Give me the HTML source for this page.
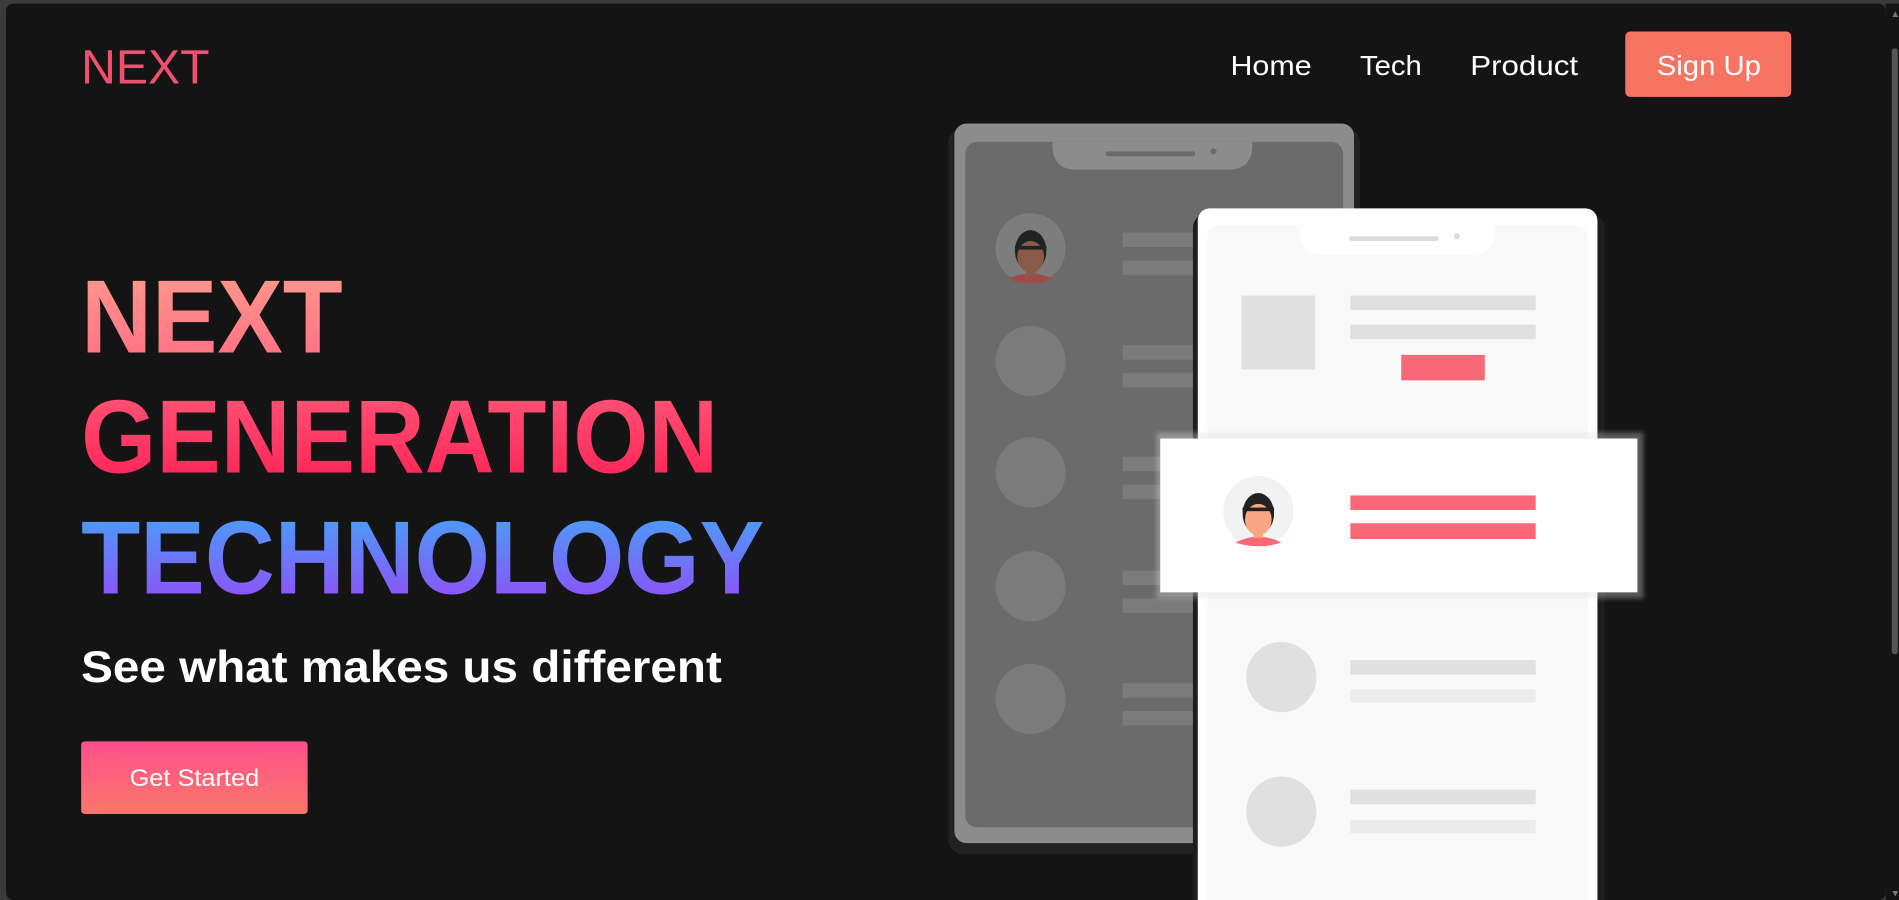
<!DOCTYPE html>
<html><head><meta charset="utf-8"><style>
html,body{margin:0;padding:0;background:#3a3a3a;overflow:hidden}
svg{display:block}
</style></head><body>
<svg width="1899" height="900" viewBox="0 0 1568 743" preserveAspectRatio="none" font-family="Liberation Sans, sans-serif">
<defs>
<linearGradient id="g1" x1="0" y1="0" x2="0" y2="1"><stop offset="0" stop-color="#ff9d8c"/><stop offset="1" stop-color="#ff6b84"/></linearGradient>
<linearGradient id="g2" x1="0" y1="0" x2="0" y2="1"><stop offset="0" stop-color="#ff5a7a"/><stop offset="1" stop-color="#ff1d52"/></linearGradient>
<linearGradient id="g3" x1="0" y1="0" x2="0" y2="1"><stop offset="0" stop-color="#3eaaf8"/><stop offset="1" stop-color="#9a44f9"/></linearGradient>
<linearGradient id="gb" x1="0" y1="0" x2="0" y2="1"><stop offset="0" stop-color="#ff4f8b"/><stop offset="1" stop-color="#f9776a"/></linearGradient>
<filter id="sh" x="-10%" y="-20%" width="120%" height="140%"><feGaussianBlur stdDeviation="2"/></filter>
</defs>
<rect x="5" y="3" width="1552" height="740" rx="6" fill="#141414"/>
<rect x="1557" y="3" width="11" height="740" fill="#141414"/>
<rect x="1562" y="40" width="5" height="500" rx="2" fill="#555"/>
<text x="1561" y="14" font-size="8" fill="#777">▲</text>
<text x="1561" y="740" font-size="8" fill="#777">▼</text>
<text x="67" y="69" font-size="40" fill="#f0506e" textLength="106" lengthAdjust="spacingAndGlyphs">NEXT</text>
<g fill="#fff" font-size="23">
<text x="1016" y="62" textLength="67" lengthAdjust="spacingAndGlyphs">Home</text>
<text x="1123" y="62" textLength="51" lengthAdjust="spacingAndGlyphs">Tech</text>
<text x="1214" y="62" textLength="89" lengthAdjust="spacingAndGlyphs">Product</text>
</g>
<rect x="1342" y="26" width="137" height="54" rx="4" fill="#f87462"/>
<text x="1368" y="62" font-size="23" fill="#fff" textLength="86" lengthAdjust="spacingAndGlyphs">Sign Up</text>
<g font-weight="bold" font-size="86">
<text x="67" y="291" fill="url(#g1)" textLength="216" lengthAdjust="spacingAndGlyphs">NEXT</text>
<text x="67" y="390" fill="url(#g2)" textLength="526" lengthAdjust="spacingAndGlyphs">GENERATION</text>
<text x="67" y="490" fill="url(#g3)" textLength="564" lengthAdjust="spacingAndGlyphs">TECHNOLOGY</text>
</g>
<text x="67" y="563" font-size="37" font-weight="bold" fill="#fff" textLength="529" lengthAdjust="spacingAndGlyphs">See what makes us different</text>
<rect x="67" y="612" width="187" height="60" rx="3" fill="url(#gb)"/>
<text x="107" y="649" font-size="20" fill="#fff" textLength="107" lengthAdjust="spacingAndGlyphs">Get Started</text>
<!-- back phone -->
<rect x="783" y="106" width="340" height="599" rx="12" fill="#222"/>
<rect x="788" y="102" width="330" height="594" rx="10" fill="#8c8c8c"/>
<rect x="797" y="117" width="312" height="566" rx="10" fill="#6b6b6b"/>
<path d="M869 117 H1034 V120 Q1034 140 1014 140 H889 Q869 140 869 120 Z" fill="#8c8c8c"/>
<rect x="913" y="125" width="74" height="4" rx="2" fill="#6b6b6b"/>
<circle cx="1002" cy="125" r="2.5" fill="#6b6b6b"/>
<g fill="#7b7b7b">
<circle cx="851" cy="205" r="29" fill="#7d7d7d"/>
<circle cx="851" cy="298" r="29"/><circle cx="851" cy="390" r="29"/><circle cx="851" cy="484" r="29"/><circle cx="851" cy="577" r="29"/>
<rect x="927" y="192" width="70" height="12"/><rect x="927" y="215" width="70" height="12"/>
<rect x="927" y="285" width="70" height="12"/><rect x="927" y="308" width="70" height="12"/>
<rect x="927" y="377" width="70" height="12"/><rect x="927" y="400" width="70" height="12"/>
<rect x="927" y="471" width="70" height="12"/><rect x="927" y="494" width="70" height="12"/>
<rect x="927" y="564" width="70" height="12"/><rect x="927" y="587" width="70" height="12"/>
</g>
<path d="M832 230 Q851 222 870 230 Q851 238 832 230Z" fill="#a04a4a"/>
<rect x="847" y="218" width="8" height="10" fill="#8a5a48"/>
<ellipse cx="851" cy="207" rx="13" ry="17" fill="#222"/>
<ellipse cx="851" cy="212" rx="11" ry="13" fill="#8a5a48"/>
<rect x="838" y="203" width="26" height="3" fill="#222"/>
<!-- front phone -->
<rect x="985" y="176" width="340" height="580" rx="12" fill="#1e1e1e"/>
<rect x="989" y="172" width="330" height="590" rx="10" fill="#fff"/>
<rect x="997" y="186" width="314" height="570" rx="10" fill="#f9f9f9"/>
<path d="M1073 186 H1234 V190 Q1234 210 1214 210 H1093 Q1073 210 1073 190 Z" fill="#fff"/>
<rect x="1114" y="195" width="74" height="4" rx="2" fill="#dcdcdc"/>
<circle cx="1203" cy="195" r="2.5" fill="#dcdcdc"/>
<rect x="1025" y="244" width="61" height="61" fill="#e0e0e0"/>
<rect x="1115" y="244" width="153" height="12" fill="#e0e0e0"/>
<rect x="1115" y="268" width="153" height="12" fill="#e0e0e0"/>
<rect x="1157" y="293" width="69" height="21" fill="#f96876"/>
<circle cx="1058" cy="559" r="29" fill="#e0e0e0"/>
<rect x="1115" y="545" width="153" height="12" fill="#e0e0e0"/><rect x="1115" y="569" width="153" height="11" fill="#ebebeb"/>
<circle cx="1058" cy="670" r="29" fill="#e0e0e0"/>
<rect x="1115" y="652" width="153" height="12" fill="#e0e0e0"/><rect x="1115" y="677" width="153" height="11" fill="#ebebeb"/>
<!-- card -->
<rect x="955" y="357" width="402" height="137" fill="#ddd" opacity="0.35" filter="url(#sh)"/>
<rect x="958" y="362" width="394" height="127" fill="#fff"/>
<circle cx="1039" cy="422" r="29" fill="#f2f2f2"/>
<path d="M1020 448 Q1039 438 1058 448 Q1039 454 1020 448Z" fill="#f96876"/>
<rect x="1035" y="434" width="8" height="10" fill="#f9a683"/>
<ellipse cx="1039" cy="424" rx="13" ry="17" fill="#222"/>
<ellipse cx="1039" cy="429" rx="11" ry="13" fill="#f9a683"/>
<rect x="1026" y="419" width="26" height="3" fill="#222"/>
<rect x="1115" y="409" width="153" height="12" fill="#f96876"/>
<rect x="1115" y="432" width="153" height="13" fill="#f96876"/>
</svg>
</body></html>
